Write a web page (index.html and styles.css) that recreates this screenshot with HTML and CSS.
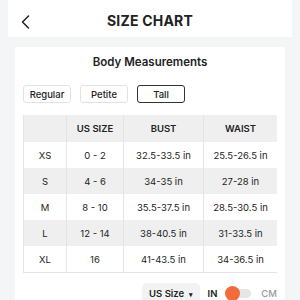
FILE: index.html
```html
<!DOCTYPE html>
<html lang="en">
<head>
  <meta charset="UTF-8" />
  <meta name="viewport" content="width=device-width, initial-scale=1" />
  <title>Size Chart</title>
  <link rel="stylesheet" href="styles.css">
</head>
<body>
  <!-- Thanh tiêu đề -->
  <div class="topbar">
    <span class="back">
      <svg width="10" height="14" viewBox="0 0 10 14"><polyline points="7.5,1 1.5,7 7.5,13" fill="none" stroke="#222" stroke-width="1.5" stroke-linecap="round" stroke-linejoin="round"/></svg>
    </span>
    <h1>SIZE CHART</h1>
  </div>

  <div class="card">
    <h2>Body Measurements</h2>

    <div class="fits">
      <button class="fit">Regular</button>
      <button class="fit">Petite</button>
      <button class="fit active">Tall</button>
    </div>

    <table class="chart">
      <tr>
        <th></th>
        <th>US SIZE</th>
        <th>BUST</th>
        <th>WAIST</th>
      </tr>
      <tr><td>XS</td><td>0 - 2</td><td>32.5-33.5 in</td><td>25.5-26.5 in</td></tr>
      <tr><td>S</td><td>4 - 6</td><td>34-35 in</td><td>27-28 in</td></tr>
      <tr><td>M</td><td>8 - 10</td><td>35.5-37.5 in</td><td>28.5-30.5 in</td></tr>
      <tr><td>L</td><td>12 - 14</td><td>38-40.5 in</td><td>31-33.5 in</td></tr>
      <tr><td>XL</td><td>16</td><td>41-43.5 in</td><td>34-36.5 in</td></tr>
    </table>

    <div class="controls">
      <span class="units">US Size <span class="caret">&#9662;</span></span>
      <span class="unit on">IN</span>
      <span class="toggle"><span class="knob"></span></span>
      <span class="unit">CM</span>
    </div>
  </div>
</body>
</html>
```

FILE: styles.css
```css
/* Nền xám nhạt */
body {
  background-color: #f4f5f7;
  color: #222;
  font-family: Inter, "Liberation Sans", sans-serif;
  margin: 0;
  height: 300px;
  overflow: hidden;
}
/* Thanh tiêu đề */
.topbar {
  background-color: #fff;
  margin: 0 8px;
  height: 37px;
  padding-top: 4px;
  box-sizing: border-box;
  display: flex;
  align-items: center;
  justify-content: center;
  position: relative;
}
.back {
  position: absolute;
  left: 13px;
  top: 15px;
  display: flex;
}
h1 {
  margin: 0;
  font-size: 14px;
  font-weight: 700;
  letter-spacing: 0.2px;
}
/* Thẻ nội dung */
.card {
  background-color: #fff;
  margin: 10px 15px 0;
  padding: 8px 8px 0;
  height: 253px;
  box-sizing: border-box;
  overflow: hidden;
}
h2 {
  margin: 0;
  text-align: center;
  font-size: 11.5px;
  font-weight: 600;
  line-height: 15px;
}
/* Nút chọn dáng */
.fits {
  display: flex;
  gap: 9px;
  margin-top: 15px;
}
.fit {
  width: 48px;
  height: 18px;
  padding: 0;
  background-color: #fff;
  color: #222;
  border: 1px solid #e2e2e2;
  border-radius: 3px;
  font-family: Inter, "Liberation Sans", sans-serif;
  font-size: 9.5px;
  font-weight: 500;
}
.fit.active {
  border-color: #333;
}
/* Bảng số đo */
.chart {
  width: 254px;
  margin-top: 12px;
  border-collapse: collapse;
  font-size: 9.5px;
  text-align: center;
  table-layout: fixed;
}
.chart th {
  background-color: #efefef;
  font-weight: 600;
  height: 27px;
  padding: 0;
}
.chart td {
  height: 26px;
  padding: 0;
}
.chart th,
.chart td {
  border-left: 1px solid #e4e4e4;
}
.chart tr:nth-child(odd) td {
  background-color: #efefef;
}
.chart tr:last-child td {
  border-bottom: 1px solid #e4e4e4;
}
.chart th:nth-child(1) { width: 42px; }
.chart th:nth-child(2) { width: 56px; }
.chart th:nth-child(3) { width: 79px; }
/* Chọn đơn vị */
.controls {
  display: flex;
  justify-content: flex-end;
  align-items: center;
  margin-top: 10px;
  font-size: 9.5px;
}
.units {
  background-color: #f2f2f2;
  border-radius: 5px;
  padding: 5px 7px;
  font-weight: 600;
}
.caret {
  font-size: 7px;
  margin-left: 2px;
}
.unit {
  color: #999;
  font-weight: 500;
}
.unit.on {
  color: #222;
  font-weight: 600;
  margin-left: 8px;
}
.toggle {
  width: 26px;
  height: 9px;
  background-color: #e6e6e6;
  border-radius: 5px;
  margin: 0 10px 0 8px;
  position: relative;
}
.knob {
  position: absolute;
  left: 0;
  top: -3px;
  width: 15px;
  height: 15px;
  border-radius: 50%;
  background-color: #f26b3a;
}
```
